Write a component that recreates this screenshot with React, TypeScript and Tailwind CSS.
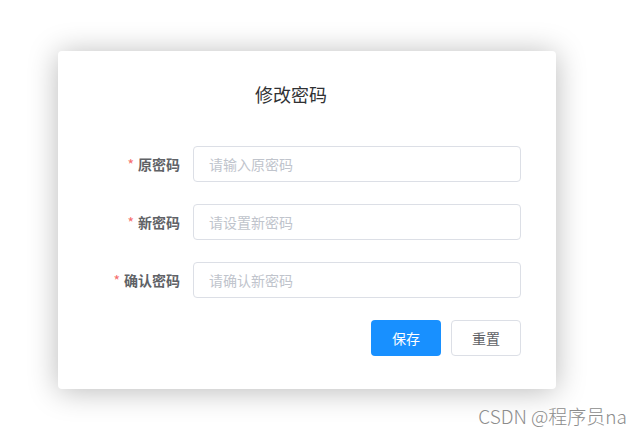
import { FC } from "react";

interface FieldProps {
  label: string;
  placeholder: string;
}

const Field: FC<FieldProps> = ({ label, placeholder }) => {
  return (
    <div className="flex items-center h-9">
      <div className="w-[135px] shrink-0 pr-[13px] text-right text-[14px] font-bold text-[#606266] leading-9">
        <span className="text-[#f56c6c] mr-1 font-normal">*</span>
        {label}
      </div>
      <input
        type="password"
        placeholder={placeholder}
        className="w-[328px] shrink-0 h-9 border border-[#dcdfe6] rounded-[4px] px-[15px] text-[14px] text-[#606266] placeholder:text-[#c0c4cc] outline-none"
      />
    </div>
  );
};

const App: FC = () => {
  return (
    <div
      className="w-[643px] h-[438px] bg-white overflow-hidden"
      style={{ fontFamily: '"Noto Sans CJK SC", "Noto Sans", sans-serif' }}
    >
      <div className="pt-[51px] pl-[58px]">
        <div className="w-[498px] h-[338px] bg-white rounded-[4px] shadow-[0_2px_30px_rgba(0,0,0,0.28)] flex flex-col">
          <div className="pt-[31px] pl-[197px] text-[18px] leading-[24px] text-[#303133]">
            修改密码
          </div>
          <div className="mt-[40px] flex flex-col gap-[22px]">
            <Field label="原密码" placeholder="请输入原密码" />
            <Field label="新密码" placeholder="请设置新密码" />
            <Field label="确认密码" placeholder="请确认新密码" />
          </div>
          <div className="mt-[22px] pl-[313px] flex gap-[10px]">
            <button className="w-[70px] h-9 rounded-[4px] bg-[#1890ff] text-white text-[14px]">
              保存
            </button>
            <button className="w-[70px] h-9 rounded-[4px] border border-[#dcdfe6] bg-white text-[#606266] text-[14px]">
              重置
            </button>
          </div>
        </div>
      </div>
      <div className="mt-[14px] pr-[16px] text-right text-[19px] font-light leading-[26px] text-[#8c8c8c]">
        CSDN @程序员na
      </div>
    </div>
  );
};

export default App;
